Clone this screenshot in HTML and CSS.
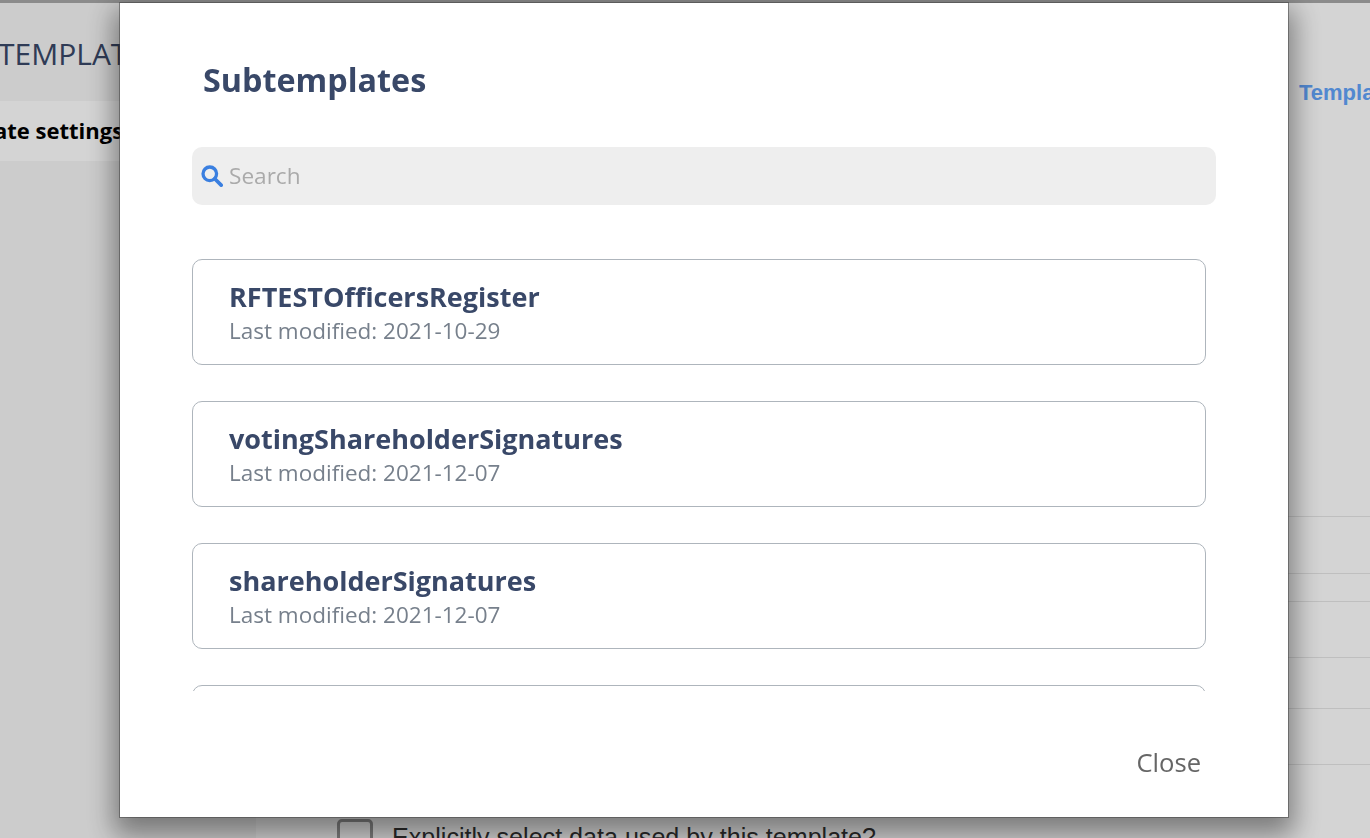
FILE: index.html
```html
<!DOCTYPE html>
<html lang="en">
<head>
<meta charset="utf-8">
<title>Subtemplates</title>
<link rel="stylesheet" href="styles.css">
</head>
<body>
<div class="page">
  <aside class="sidebar">
    <div class="page-title">TEMPLATES</div>
    <div class="side-item">Template settings</div>
  </aside>
  <main class="content">
    <div class="tabs"><a class="tab-link">Template</a></div>
    <div class="rows">
      <div class="row row-a"></div>
      <div class="row row-b"></div>
      <div class="row row-c"></div>
      <div class="row row-d"></div>
      <div class="row row-e"></div>
      <div class="row row-f"></div>
    </div>
    <label class="check-row"><span class="check"></span><span class="check-label">Explicitly select data used by this template?</span></label>
  </main>
</div>
<div class="overlay"></div>
<div class="modal">
  <h1 class="modal-title">Subtemplates</h1>
  <div class="search">
    <svg class="search-icon" viewBox="0 0 24 24" width="22" height="22" aria-hidden="true"><circle cx="9.6" cy="9.6" r="7.4" fill="none" stroke="#3a7fe0" stroke-width="3.6"/><path d="M15 15l7 7" fill="none" stroke="#3a7fe0" stroke-width="4" stroke-linecap="round"/></svg>
    <span class="search-text">Search</span>
  </div>
  <div class="list">
    <div class="card"><div class="card-name">RFTESTOfficersRegister</div><div class="card-date">Last modified: 2021-10-29</div></div>
    <div class="card"><div class="card-name">votingShareholderSignatures</div><div class="card-date">Last modified: 2021-12-07</div></div>
    <div class="card"><div class="card-name">shareholderSignatures</div><div class="card-date">Last modified: 2021-12-07</div></div>
    <div class="card"><div class="card-name">&nbsp;</div><div class="card-date">&nbsp;</div></div>
  </div>
  <div class="modal-footer"><span class="close">Close</span></div>
</div>
</body>
</html>
```
FILE: styles.css
```css
* { box-sizing: border-box; }
html, body { margin: 0; padding: 0; height: 100%; overflow: hidden; }
body { font-family: "Open Sans", sans-serif; background: #fff; }
.page { display: flex; height: 838px; border-top: 3px solid #a8a8a8; background: #fff; }
.sidebar { width: 256px; flex: none; background: #f6f6f6; padding-top: 31px; overflow: hidden; }
.page-title { font-size: 30px; line-height: 40px; color: #394868; margin-left: -2px; white-space: nowrap; }
.side-item { margin-top: 27px; height: 60px; line-height: 59px; background: #fff; font-size: 22px; font-weight: 700; color: #000; margin-left: -74px; white-space: nowrap; }
.content { flex: 1; min-width: 0; }
.tabs { height: 513px; padding: 77px 0 0 1044px; overflow: hidden; white-space: nowrap; }
.tab-link { font-family: "Liberation Sans", sans-serif; font-weight: 700; font-size: 22px; color: #62a4fb; margin-left: -1px; }
.row { border-top: 1px solid #e6e6e6; }
.row-a { height: 57px; }
.row-b { height: 28px; }
.row-c { height: 56px; }
.row-d { height: 51px; }
.row-e { height: 56px; }
.row-f { height: 55px; }
.check-row { display: flex; align-items: flex-start; gap: 19px; margin-left: 81px; }
.check { width: 36px; height: 36px; border: 3px solid #999; border-radius: 5px; background: #fff; flex: none; }
.check-label { font-family: "Liberation Sans", sans-serif; font-size: 25.1px; line-height: 30px; color: #333; padding-top: 3px; white-space: nowrap; }
.overlay { position: fixed; inset: 0; background: rgba(0,0,0,.17); }
.modal { position: fixed; left: 120px; top: 3px; width: 1168px; height: 814px; background: #fff; box-shadow: 0 0 0 1px rgba(60,60,60,.5), 0 12px 26px 6px rgba(0,0,0,.42); padding: 0 72px; }
.modal-title { margin: 0 0 0 11px; padding-top: 54px; font-size: 32.3px; line-height: 44px; font-weight: 700; color: #394868; }
.search { display: flex; align-items: center; gap: 6px; height: 58px; margin-top: 46px; width: 1024px; padding-left: 9px; border-radius: 10px; background: #eee; }
.search-icon { display: block; flex: none; }
.search-text { font-size: 22.6px; line-height: 58px; height: 58px; color: #aaa; }
.list { height: 432px; margin-top: 54px; overflow: hidden; width: 1014px; }
.card { height: 106px; margin-bottom: 36px; padding: 20px 36px 0; border: 1px solid #aeb5bc; border-radius: 10px; }
.card-name { font-size: 27px; line-height: 34px; font-weight: 700; color: #394868; white-space: nowrap; }
.card-date { font-size: 22.5px; line-height: 34px; color: #77808c; white-space: nowrap; }
.modal-footer { display: flex; justify-content: flex-end; margin-top: 55px; margin-right: 15px; }
.close { font-size: 25.6px; line-height: 34px; color: #666; }
```
